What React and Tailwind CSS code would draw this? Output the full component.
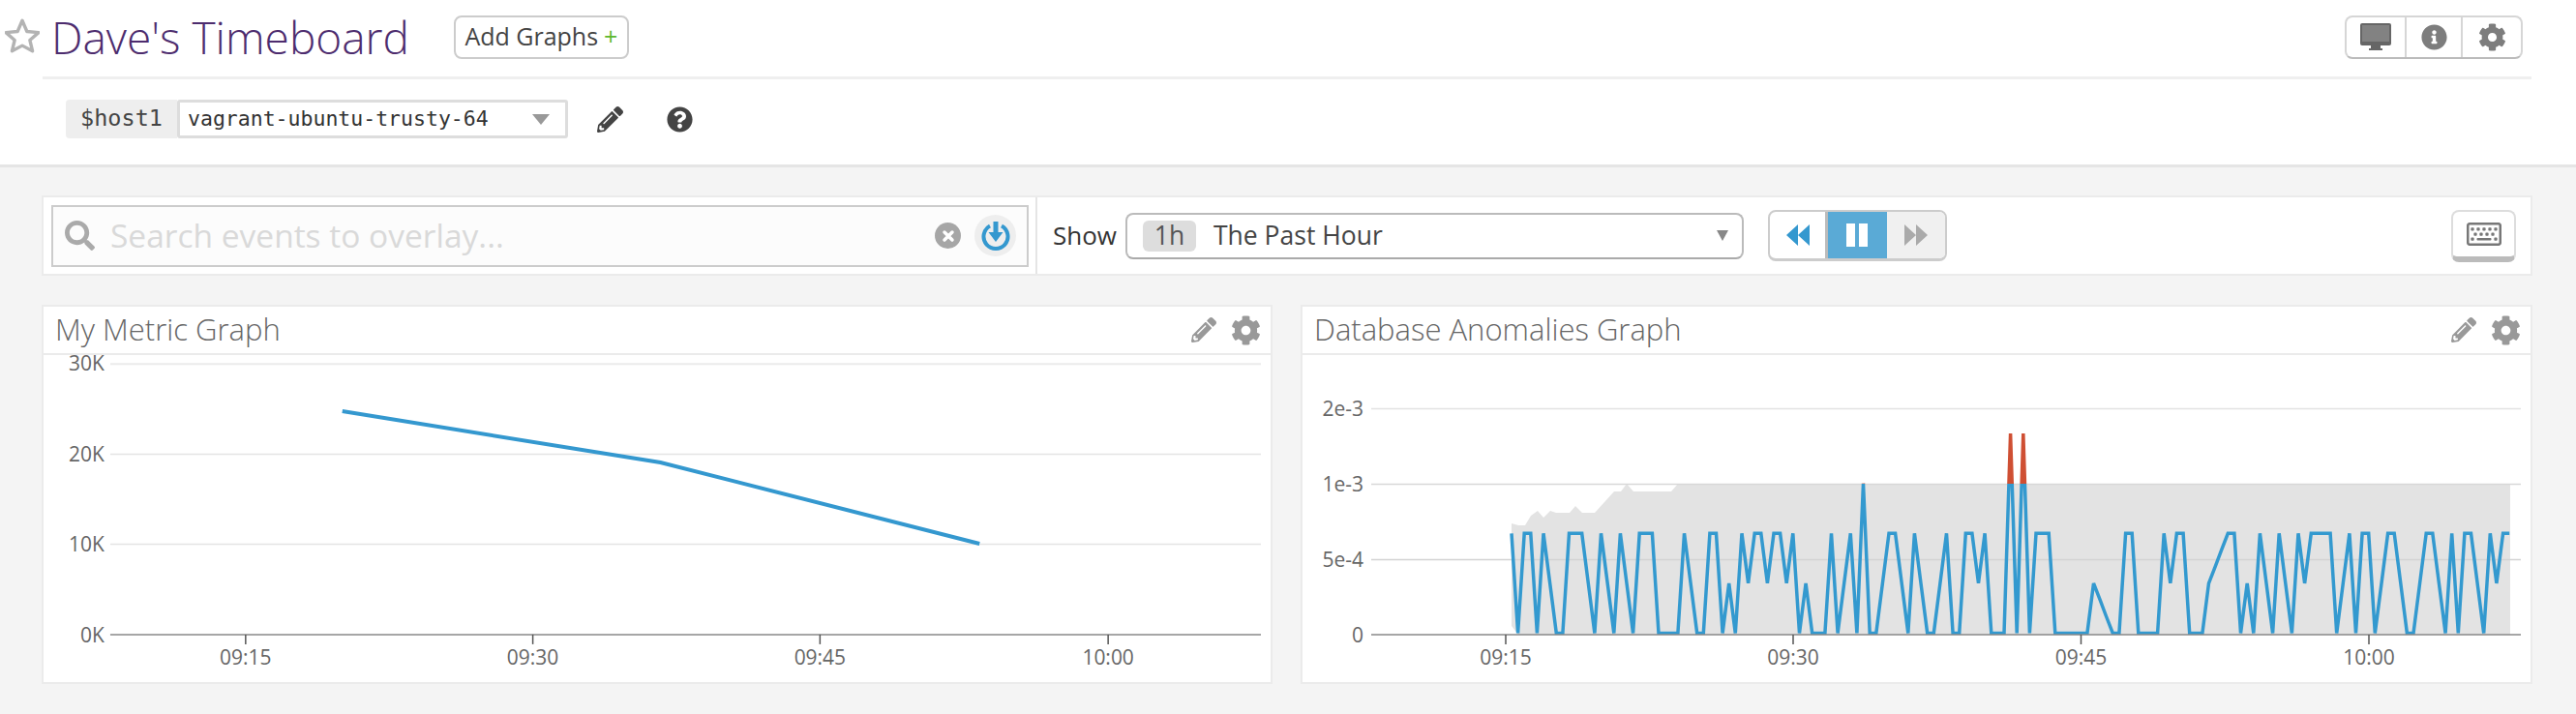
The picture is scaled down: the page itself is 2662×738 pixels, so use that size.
import { FaCog, FaInfoCircle, FaPencilAlt, FaQuestionCircle, FaRegKeyboard, FaSearch } from "react-icons/fa"

const font = { open: "font-['Open_Sans',sans-serif]" }

// values of the anomaly series, in thirds of 1e-3, one every 20 seconds
const series = [
    2, 0, 2, 2, 0, 2, 1, 0, 0, 2, 2, 2, 1, 0, 2, 1, 0, 2, 1, 0,
    2, 2, 2, 0, 0, 0, 0, 2, 1, 0, 0, 2, 2, 0, 1, 0, 2, 1, 2, 2,
    1, 2, 2, 1, 2, 0, 1, 0, 0, 0, 2, 0, 1, 2, 0, 3, 0, 0, 1, 2,
    2, 1, 0, 2, 1, 0, 0, 1, 2, 0, 0, 2, 2, 1, 2, 0, 0, 0, 4, 0,
    4, 0, 2, 2, 2, 0, 0, 0, 0, 0, 0, 1, 0.67, 0.33, 0, 0, 2, 2, 0, 0,
    0, 0, 2, 1, 2, 2, 0, 0, 0, 1, 1.33, 1.67, 2, 2, 0, 1, 0, 2, 1, 0,
    2, 1, 0, 2, 1, 2, 2, 2, 2, 0, 1, 2, 0, 2, 2, 0, 1, 2, 2, 1,
    0, 0, 1, 2, 2, 1, 0, 2, 0, 2, 2, 1, 0, 2, 1, 2, 2,
]
const seriesPoints = series
    .map((v, i) => `${(1562 + i * 6.61).toFixed(1)},${(654.5 - v * 51.6).toFixed(1)}`)
    .join(" ")

// upper edge of the grey band, x and y taken off the reference
const bandPoints = [
    [1562, 541], [1569, 543], [1576, 543], [1582, 533], [1589, 528], [1595, 535], [1602, 528], [1608, 530],
    [1622, 530], [1628, 523], [1635, 530], [1648, 530], [1668, 508], [1675, 508], [1681, 500], [1688, 508],
    [1727, 508], [1734, 500], [2594, 500], [2594, 656], [1569, 656], [1562, 647],
].map(p => p.join(",")).join(" ")

const GraphLabels = ({ yLabels, xLabels, right }) => (
    <g className={font.open} fontSize="21" fill="#666">
        {yLabels.map(([label, y]) => (
            <text key={label} x={right} y={y + 8} textAnchor="end">{label}</text>
        ))}
        {xLabels.map(([label, x]) => (
            <g key={label}>
                <line x1={x} x2={x} y1="656" y2="666" stroke="#555" strokeWidth="1.5" />
                <text x={x} y="687" textAnchor="middle">{label}</text>
            </g>
        ))}
    </g>
)

const MetricChart = () => (
    <svg viewBox="45 367 1269 338" className="block w-full h-[338px] overflow-visible">
        <line x1="114" x2="1304" y1="376" y2="376" stroke="#ebebeb" strokeWidth="2" />
        <line x1="114" x2="1304" y1="469.5" y2="469.5" stroke="#e4e4e4" strokeWidth="1.5" />
        <line x1="114" x2="1304" y1="562.5" y2="562.5" stroke="#e4e4e4" strokeWidth="1.5" />
        <line x1="114" x2="1304" y1="656" y2="656" stroke="#888" strokeWidth="1.5" />
        <GraphLabels
            right={108}
            yLabels={[["30K", 375], ["20K", 469], ["10K", 562], ["0K", 656]]}
            xLabels={[["09:15", 254], ["09:30", 551], ["09:45", 848], ["10:00", 1146]]}
        />
        <polyline points="354,425 683,478 1013,562" fill="none" stroke="#3498cf" strokeWidth="4" />
    </svg>
)

const AnomalyChart = () => (
    <svg viewBox="1346 367 1269 338" className="block w-full h-[338px]">
        <defs>
            <clipPath id="over"><rect x="1400" y="400" width="1300" height="100" /></clipPath>
            <clipPath id="under"><rect x="1400" y="500" width="1300" height="156" /></clipPath>
        </defs>
        <polygon points={bandPoints} fill="#e3e3e3" />
        <line x1="1417" x2="2605" y1="422.5" y2="422.5" stroke="#e2e2e2" strokeWidth="1.5" />
        <line x1="1417" x2="2605" y1="500.5" y2="500.5" stroke="#d8d8d8" strokeWidth="1.5" />
        <line x1="1417" x2="2605" y1="578.5" y2="578.5" stroke="#d2d2d2" strokeWidth="1.5" />
        <polyline points={seriesPoints} clipPath="url(#over)" fill="none" stroke="#cf4f33" strokeWidth="3.5" strokeLinejoin="miter" />
        <polyline points={seriesPoints} clipPath="url(#under)" fill="none" stroke="#3399cf" strokeWidth="3.5" strokeLinejoin="miter" />
        <line x1="1417" x2="2605" y1="656" y2="656" stroke="#888" strokeWidth="1.5" />
        <GraphLabels
            right={1409}
            yLabels={[["2e-3", 422], ["1e-3", 500], ["5e-4", 578], ["0", 656]]}
            xLabels={[["09:15", 1556], ["09:30", 1853], ["09:45", 2150.5], ["10:00", 2448]]}
        />
    </svg>
)

const GraphPanel = ({ title, className, children }) => (
    <div className={`h-[392px] bg-white border-2 border-[#ebebeb] ${className}`}>
        <div className="h-[50px] border-b-[2px] border-[#ebebeb] flex items-center pl-[12px] pr-[10px]">
            <h2 className="text-[31px] font-light leading-none text-[#666] pb-[2px]">{title}</h2>
            <div className="ml-auto flex items-center gap-[15px] text-[#999]">
                <FaPencilAlt className="w-[26px] h-[26px]" />
                <FaCog className="w-[31px] h-[31px]" />
            </div>
        </div>
        {children}
    </div>
)

const App = () => {
    return (
        <div className={`w-full h-[738px] overflow-hidden bg-[#f4f4f4] ${font.open}`}>
            <header className="h-[173px] bg-white border-b-[3px] border-[#e5e5e5]">
                <div className="ml-[44px] w-[2572px] h-[82px] border-b-[3px] border-[#efefef] flex items-center">
                    <svg viewBox="2 1 32 32" className="w-[36px] h-[36px] -ml-[39px] mr-[12px] -mt-[6px]">
                        <polygon
                            points="18,3 22.3,13 33,14 25,21 27.4,31 18,26 8.6,31 11,21 3,14 13.7,13"
                            fill="none" stroke="#b3b3b3" strokeWidth="3" strokeLinejoin="round"
                        />
                    </svg>
                    <h1 className="text-[46px] font-light leading-none text-[#4d2c6e] -mt-[3px]">Dave's Timeboard</h1>
                    <button className="ml-[46px] -mt-[3px] h-[45px] w-[181px] flex items-center justify-center gap-[6px] rounded-[8px] border-2 border-[#ccc] text-[25px] text-[#444] whitespace-nowrap">
                        Add Graphs <span className="text-[#5cb82e]">+</span>
                    </button>
                    <div className="ml-auto mr-[9px] -mt-[3px] h-[45px] w-[184px] grid grid-cols-3 rounded-[8px] border-2 border-[#d6d6d6] border-b-[#bbb] text-[#7d7d7d]">
                        <div className="flex items-center justify-center">
                            <svg viewBox="0 0 32 28" className="w-[32px] h-[28px]">
                                <rect width="32" height="23" rx="2" fill="#666" />
                                <rect x="2" y="2" width="28" height="17" fill="#828282" />
                                <path d="M11 23h10v3h2v2H9v-2h2z" fill="#666" />
                            </svg>
                        </div>
                        <div className="flex items-center justify-center border-x-2 border-[#d6d6d6]"><FaInfoCircle className="w-[27px] h-[27px]" /></div>
                        <div className="flex items-center justify-center"><FaCog className="w-[29px] h-[29px]" /></div>
                    </div>
                </div>
                <div className="ml-[68px] mt-[21px] h-[40px] flex items-center">
                    <div className="h-full w-[115px] bg-[#eee] rounded-l-[4px] flex items-center justify-center font-['DejaVu_Sans_Mono',monospace] text-[23.5px] text-[#444]">
                        $host1
                    </div>
                    <div className="h-full w-[404px] border-[3px] border-[#ddd] rounded-[3px] flex items-center pl-[8px] pr-[16px] font-['DejaVu_Sans_Mono',monospace] text-[21.5px] text-[#333]">
                        vagrant-ubuntu-trusty-64
                        <span className="ml-auto w-0 h-0 border-x-[9px] border-x-transparent border-t-[11px] border-t-[#999]"></span>
                    </div>
                    <FaPencilAlt className="ml-[30px] w-[27px] h-[27px] text-[#444]" />
                    <FaQuestionCircle className="ml-[45px] w-[27px] h-[27px] text-[#444]" />
                </div>
            </header>

            <div className="mt-[29px] ml-[43px] w-[2574px] h-[83px] bg-white border-2 border-[#ebebeb] flex">
                <div className="w-[1027px] border-r-2 border-[#e5e5e5] pl-[8px] flex items-center">
                    <div className="w-[1010px] h-[64px] border-2 border-[#ccc] bg-[#fcfcfc] flex items-center pl-[12px]">
                        <FaSearch className="w-[31px] h-[31px] text-[#aaa]" />
                        <span className="ml-[16px] text-[33.5px] leading-none text-[#d9d9d9] whitespace-nowrap">Search events to overlay...</span>
                        <span className="ml-auto w-[27px] h-[27px] rounded-full bg-[#a6a6a6] flex items-center justify-center text-white">
                            <svg viewBox="0 0 14 14" className="w-[14px] h-[14px]"><path d="M3 3l8 8M11 3l-8 8" stroke="currentColor" strokeWidth="3.5" strokeLinecap="round" /></svg>
                        </span>
                        <span className="ml-[14px] mr-[11px] w-[43px] h-[43px] rounded-full bg-[#eee] flex items-center justify-center">
                            <svg viewBox="0 0 32 32" className="w-[32px] h-[32px]">
                                <path d="M10 5.5a12.500 12.500 0 1 0 12 0" fill="none" stroke="#3498cf" strokeWidth="4" />
                                <path d="M13.500 1h5v11h5l-7.500 10l-7.500 -10h5z" fill="#3498cf" />
                            </svg>
                        </span>
                    </div>
                </div>
                <div className="flex-1 flex items-center pl-[16px] pr-[15px]">
                    <span className="text-[26px] text-[#333]">Show</span>
                    <div className="ml-[9px] w-[639px] h-[48px] rounded-[8px] border-2 border-[#bbb] border-b-[#aaa] flex items-center pl-[16px] pr-[14px] text-[#444] text-[26.500px]">
                        <span className="w-[55px] h-[32px] rounded-[6px] bg-[#ddd] flex items-center justify-center text-[#555]">1h</span>
                        <span className="ml-[18px]">The Past Hour</span>
                        <span className="ml-auto w-0 h-0 border-x-[6px] border-x-transparent border-t-[11px] border-t-[#888]"></span>
                    </div>
                    <div className="ml-[25px] w-[185px] h-[53px] grid grid-cols-3 rounded-[8px] overflow-hidden border-2 border-[#ccc] border-b-[3px]">
                        <div className="flex items-center justify-center border-r-[3px] border-[#bbb]">
                            <svg viewBox="0 0 24 24" className="w-[24px] h-[24px]"><path d="M12 1v22L0 12zM24 1v22L12 12z" fill="#3498cf" /></svg>
                        </div>
                        <div className="flex items-center justify-center gap-[4px] bg-[#5aaad6] -my-[2px]">
                            <span className="w-[9px] h-[24px] bg-white"></span>
                            <span className="w-[9px] h-[24px] bg-white"></span>
                        </div>
                        <div className="flex items-center justify-center bg-[#f0f0f0]">
                            <svg viewBox="0 0 24 24" className="w-[24px] h-[24px]"><path d="M0 1v22l12-11zM12 1v22l12-11z" fill="#aaa" /></svg>
                        </div>
                    </div>
                    <button className="ml-auto w-[67px] h-[54px] rounded-[8px] border-2 border-[#ddd] border-b-[6px] border-b-[#bbb] flex items-center justify-center text-[#777]">
                        <FaRegKeyboard className="w-[36px] h-[36px]" />
                    </button>
                </div>
            </div>

            <div className="mt-[30px] ml-[43px] w-[2574px] flex gap-[29px]">
                <GraphPanel title="My Metric Graph" className="w-[1272px]">
                    <MetricChart />
                </GraphPanel>
                <GraphPanel title="Database Anomalies Graph" className="w-[1273px]">
                    <AnomalyChart />
                </GraphPanel>
            </div>
        </div>
    )
}

export default App
